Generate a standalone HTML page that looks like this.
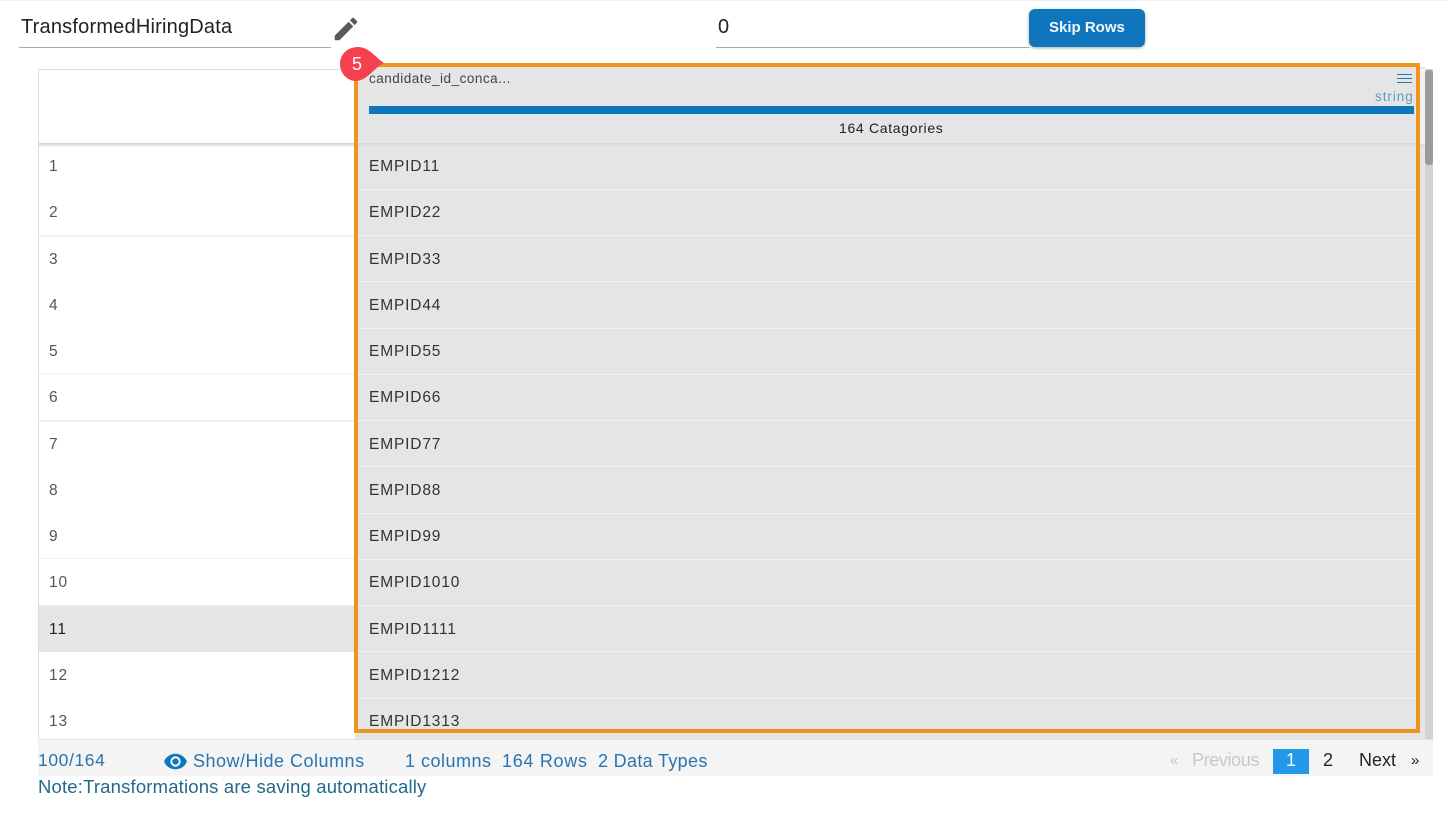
<!DOCTYPE html>
<html><head><meta charset="utf-8">
<style>
html,body{margin:0;padding:0;background:#fff;}
body{width:1446px;height:814px;position:relative;overflow:hidden;font-family:"Liberation Sans",sans-serif;}
div,span.t{position:absolute;}
.t{white-space:nowrap;line-height:20px;height:20px;}
.n{left:49px;font-size:15.5px;color:#555;letter-spacing:.9px;}
.e{left:369px;font-size:15.5px;color:#333;letter-spacing:.85px;}
.f{font-size:18px;color:#2a74b0;top:751px;}
.l{left:39px;width:315px;height:2px;background:#f0f0f0;}
.g{left:358px;width:1062px;height:1px;background:#f0f0f0;}
</style></head><body>
<div style="left:0;top:0;width:1446px;height:1px;background:#f0f0f0"></div>

<span class="t" style="left:21px;top:17px;font-size:20px;color:#222;letter-spacing:.2px">TransformedHiringData</span>
<div style="left:19px;top:47px;width:312px;height:1px;background:#aaa"></div>
<svg style="position:absolute;left:331px;top:14px" width="30" height="30" viewBox="0 0 24 24"><path fill="#5a5a5a" d="M3 17.25V21h3.75L17.81 9.94l-3.75-3.75L3 17.25zM20.71 7.04a1 1 0 0 0 0-1.41l-2.34-2.34a1 1 0 0 0-1.41 0l-1.83 1.83 3.75 3.75 1.83-1.83z"/></svg>

<span class="t" style="left:718px;top:17px;font-size:20px;color:#222">0</span>
<div style="left:716px;top:47px;width:313px;height:1px;background:#aaa"></div>
<div style="left:1029px;top:9px;width:116px;height:38px;background:#0f75bd;border-radius:6px;box-shadow:0 1px 3px rgba(0,0,0,.35)"></div>
<span class="t" style="left:1049px;top:18px;font-size:15px;font-weight:bold;color:#f2f7fb;letter-spacing:0">Skip Rows</span>

<!-- table -->
<div style="left:38px;top:69px;width:1387px;height:670px;background:#fff;border-left:1px solid #ddd;border-top:1px solid #ddd;box-sizing:border-box"></div>
<div style="left:39px;top:143px;width:1386px;height:4px;background:linear-gradient(#cfcfcf,#f8f8f8)"></div>
<div style="left:355px;top:67px;width:1070px;height:672px;background:#e5e5e5"></div>
<div style="left:355px;top:143px;width:1070px;height:4px;background:linear-gradient(#d8d8d8,#e5e5e5)"></div>
<div style="left:1420px;top:69px;width:5px;height:75px;background:#f2f2f2"></div>
<div style="left:1425px;top:69px;width:8px;height:670px;background:#d2d2d2"></div>
<div style="left:1425px;top:70px;width:8px;height:95px;background:#9a9a9a;border-radius:3px"></div>

<!-- row separators -->
<div class="l" style="top:235px"></div>
<div class="l" style="top:373px;height:1px"></div>
<div class="l" style="top:420px"></div>
<div class="l" style="top:558px;height:1px"></div>
<div class="l" style="top:605px"></div>
<div style="left:39px;top:606px;width:316px;height:46px;background:#e5e5e5"></div>
<div class="g" style="top:189px"></div>
<div class="g" style="top:235px"></div>
<div class="g" style="top:281px"></div>
<div class="g" style="top:328px"></div>
<div class="g" style="top:374px"></div>
<div class="g" style="top:420px"></div>
<div class="g" style="top:466px"></div>
<div class="g" style="top:513px"></div>
<div class="g" style="top:559px"></div>
<div class="g" style="top:605px"></div>
<div class="g" style="top:651px"></div>
<div class="g" style="top:698px"></div>

<!-- header cell -->
<span class="t" style="left:369px;top:69px;font-size:13.5px;color:#444;letter-spacing:.5px">candidate_id_conca...</span>
<div style="left:1397px;top:74px;width:15px;height:1.4px;background:#2a74b0"></div>
<div style="left:1397px;top:78px;width:15px;height:1.4px;background:#2a74b0"></div>
<div style="left:1397px;top:82px;width:15px;height:1.4px;background:#2a74b0"></div>
<span class="t" style="left:1375px;top:87px;font-size:13.5px;color:#5b9bc9;letter-spacing:.95px">string</span>
<div style="left:369px;top:106px;width:1045px;height:8px;background:#0f75bd"></div>
<span class="t" style="left:839px;top:118px;font-size:14px;color:#222;letter-spacing:.68px">164 Catagories</span>

<!-- rows -->
<span class="t n" style="top:157px">1</span><span class="t e" style="top:157px">EMPID11</span>
<span class="t n" style="top:203px">2</span><span class="t e" style="top:203px">EMPID22</span>
<span class="t n" style="top:250px">3</span><span class="t e" style="top:250px">EMPID33</span>
<span class="t n" style="top:296px">4</span><span class="t e" style="top:296px">EMPID44</span>
<span class="t n" style="top:342px">5</span><span class="t e" style="top:342px">EMPID55</span>
<span class="t n" style="top:388px">6</span><span class="t e" style="top:388px">EMPID66</span>
<span class="t n" style="top:435px">7</span><span class="t e" style="top:435px">EMPID77</span>
<span class="t n" style="top:481px">8</span><span class="t e" style="top:481px">EMPID88</span>
<span class="t n" style="top:527px">9</span><span class="t e" style="top:527px">EMPID99</span>
<span class="t n" style="top:573px">10</span><span class="t e" style="top:573px">EMPID1010</span>
<span class="t n" style="top:620px;color:#222">11</span><span class="t e" style="top:620px">EMPID1111</span>
<span class="t n" style="top:666px">12</span><span class="t e" style="top:666px">EMPID1212</span>
<span class="t n" style="top:712px">13</span><span class="t e" style="top:712px">EMPID1313</span>

<!-- orange highlight -->
<div style="left:354px;top:63px;width:1066px;height:670px;box-sizing:border-box;border:4px solid #ee951f"></div>
<svg style="position:absolute;left:336px;top:44px" width="52" height="40" viewBox="0 0 52 40"><path fill="#f5414f" d="M4 20C4 10 12 3 22 3C33 3 40 14 48 19C39 23 31 37 20 37C11 37 4 29 4 20Z"/></svg>
<span class="t" style="left:352px;top:54px;font-size:18px;color:#fff">5</span>

<!-- footer -->
<div style="left:38px;top:739px;width:1395px;height:37px;background:#f4f4f4;border-top:1px solid #e2e2e2;box-sizing:border-box"></div>
<span class="t f" style="left:38px;top:750px;font-size:17.5px;letter-spacing:.6px">100/164</span>
<svg style="position:absolute;left:163px;top:749px" width="25" height="25" viewBox="0 0 24 24"><path fill="#0f75bd" d="M12 4.500C7 4.500 2.730 7.610 1 12c1.730 4.390 6 7.500 11 7.500s9.270-3.110 11-7.500c-1.730-4.390-6-7.500-11-7.500zM12 17a5 5 0 1 1 0-10 5 5 0 0 1 0 10zm0-8a3 3 0 1 0 0 6 3 3 0 0 0 0-6z"/></svg>
<span class="t f" style="left:193px;letter-spacing:.5px">Show/Hide Columns</span>
<span class="t f" style="left:405px;letter-spacing:.5px">1 columns</span>
<span class="t f" style="left:502px;letter-spacing:.7px">164 Rows</span>
<span class="t f" style="left:598px;letter-spacing:.33px">2 Data Types</span>

<span class="t" style="left:1170px;top:751px;font-size:15px;color:#c4c4c4">«</span>
<span class="t" style="left:1192px;top:750px;font-size:18px;color:#c8c8c8;letter-spacing:-.37px">Previous</span>
<div style="left:1273px;top:749px;width:36px;height:25px;background:#2299e8"></div>
<span class="t" style="left:1286px;top:750px;font-size:18px;color:#fff">1</span>
<span class="t" style="left:1323px;top:750px;font-size:18px;color:#222">2</span>
<span class="t" style="left:1359px;top:750px;font-size:18px;color:#222">Next</span>
<span class="t" style="left:1411px;top:751px;font-size:15px;color:#222">»</span>

<span class="t" style="left:38px;top:777px;font-size:18.5px;color:#1f6a8a;letter-spacing:.17px">Note:Transformations are saving automatically</span>
</body></html>
